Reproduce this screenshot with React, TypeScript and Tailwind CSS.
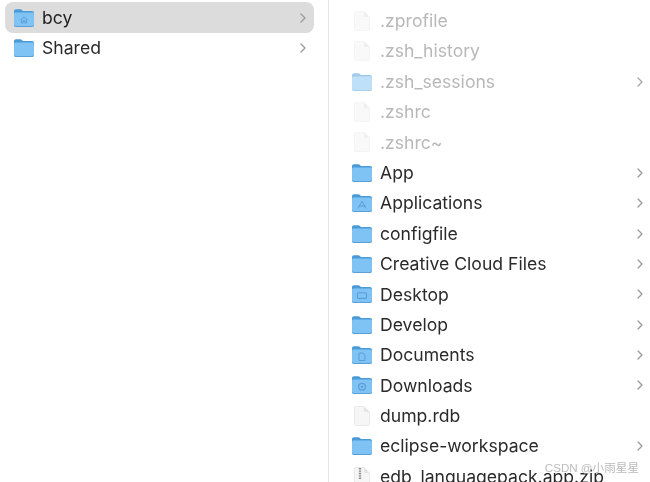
import React from "react";

type Glyph = "none" | "home" | "apps" | "desktop" | "docs" | "down";

function Folder({ glyph = "none", faded = false }: { glyph?: Glyph; faded?: boolean }) {
  const mark = "#5a9fd8";
  return (
    <svg width="22" height="20" viewBox="0 0 22 20" className={faded ? "shrink-0 opacity-50" : "shrink-0"}>
      <path d="M1 3.2C1 2 1.8 1.2 3 1.2H7.2C8 1.2 8.4 1.5 9 2.1L9.8 3H19C20.2 3 21 3.8 21 5V8H1Z" fill="#4a9ad8" />
      <path d="M1 6.2C1 5.2 1.7 4.6 2.6 4.6H19.4C20.3 4.6 21 5.2 21 6.2V17C21 18.2 20.2 19 19 19H3C1.8 19 1 18.2 1 17Z" fill="#7fc3f4" />
      <path d="M1 17C1 18.2 1.8 19 3 19H19C20.2 19 21 18.2 21 17V16.6C21 17.5 20.2 18 19 18H3C1.8 18 1 17.5 1 16.6Z" fill="#5a9fd6" />
      {glyph === "home" && <path d="M7.5 12L11 9L14.5 12M8.6 11.4V15H10.2V12.8H11.8V15H13.4V11.4" fill="none" stroke={mark} strokeWidth="1" />}
      {glyph === "apps" && <path d="M11 8L7 15.5M11 8L15 15.5M7.6 13H14.4" fill="none" stroke={mark} strokeWidth="1" />}
      {glyph === "desktop" && <rect x="6.5" y="8.8" width="9" height="5.6" rx="1" fill="none" stroke={mark} strokeWidth="1.1" />}
      {glyph === "docs" && <path d="M8 8H12L14 10V15.5H8Z" fill="none" stroke={mark} strokeWidth="1" />}
      {glyph === "down" && (
        <>
          <circle cx="11" cy="11.8" r="3.4" fill="none" stroke={mark} strokeWidth="1.3" />
          <circle cx="11" cy="11.8" r="1.2" fill={mark} />
        </>
      )}
    </svg>
  );
}

function FileIcon({ faded = false, zip = false }: { faded?: boolean; zip?: boolean }) {
  return (
    <svg width="22" height="20" viewBox="0 0 22 20" className="shrink-0">
      <path
        d="M3.5 1.5C3.5 0.9 3.9 0.5 4.5 0.5H13L18.5 6V18.5C18.5 19.1 18.1 19.5 17.5 19.5H4.5C3.9 19.5 3.5 19.1 3.5 18.5Z"
        fill={faded ? "#f9f9f9" : "#f6f6f6"}
        stroke={faded ? "#f1f1f1" : "#e6e6e6"}
        strokeWidth="0.8"
      />
      <path d="M13 0.5V6H18.5Z" fill={faded ? "#efefef" : "#e4e4e4"} />
      {zip && <path d="M9 1V13" stroke="#8a8a8a" strokeWidth="2.4" strokeDasharray="1.4 1" />}
    </svg>
  );
}

function Chevron({ faded = false }: { faded?: boolean }) {
  return (
    <svg width="8" height="12" viewBox="0 0 8 12" className="shrink-0">
      <path d="M2 2L6 6L2 10" fill="none" stroke={faded ? "#a6a6a6" : "#9a9a9a"} strokeWidth="1.3" strokeLinecap="round" strokeLinejoin="round" />
    </svg>
  );
}

type Item = { name: string; kind: "folder" | "file" | "zip"; glyph?: Glyph; faded?: boolean };

const items: Item[] = [
  { name: ".zprofile", kind: "file", faded: true },
  { name: ".zsh_history", kind: "file", faded: true },
  { name: ".zsh_sessions", kind: "folder", faded: true },
  { name: ".zshrc", kind: "file", faded: true },
  { name: ".zshrc~", kind: "file", faded: true },
  { name: "App", kind: "folder" },
  { name: "Applications", kind: "folder", glyph: "apps" },
  { name: "configfile", kind: "folder" },
  { name: "Creative Cloud Files", kind: "folder" },
  { name: "Desktop", kind: "folder", glyph: "desktop" },
  { name: "Develop", kind: "folder" },
  { name: "Documents", kind: "folder", glyph: "docs" },
  { name: "Downloads", kind: "folder", glyph: "down" },
  { name: "dump.rdb", kind: "file" },
  { name: "eclipse-workspace", kind: "folder" },
  { name: "edb_languagepack.app.zip", kind: "zip" },
];

function Row({ item }: { item: Item }) {
  return (
    <div className="flex h-[30.4px] shrink-0 items-center pl-[22px] pr-[6px]">
      {item.kind === "folder" ? (
        <Folder glyph={item.glyph} faded={item.faded} />
      ) : (
        <FileIcon faded={item.faded} zip={item.kind === "zip"} />
      )}
      <span className={"ml-[7px] flex-1 whitespace-nowrap " + (item.faded ? "text-[#b8b8b8]" : "text-[#2a2a2a]")}>{item.name}</span>
      {item.kind === "folder" && <Chevron faded={item.faded} />}
    </div>
  );
}

export default function App() {
  return (
    <div className="relative flex h-[482px] w-[650px] overflow-hidden bg-white font-['Inter',sans-serif] text-[17.6px] leading-none blur-[0.4px]">
      <div className="flex w-[329px] shrink-0 flex-col border-r border-[#e6e6e6] pl-[5px] pr-[14px] pt-[2px]">
        <div className="flex h-[31px] items-center rounded-[8px] bg-[#dcdcdc] pl-[8px] pr-[7px]">
          <Folder glyph="home" />
          <span className="ml-[7px] flex-1 text-[#1f1f1f]">bcy</span>
          <Chevron />
        </div>
        <div className="flex h-[30px] items-center pl-[8px] pr-[7px]">
          <Folder />
          <span className="ml-[7px] flex-1 text-[#2a2a2a]">Shared</span>
          <Chevron />
        </div>
      </div>
      <div className="flex min-w-0 flex-1 flex-col pt-[5.6px]">
        {items.map((item) => (
          <Row key={item.name} item={item} />
        ))}
      </div>
      <div className="absolute left-0 top-[-25px] ml-[329px] flex h-[30.4px] items-center pl-[22px]">
        <FileIcon faded />
      </div>
      <div className="absolute right-[11px] top-[462px] font-['Liberation_Sans','Noto_Sans_CJK_SC',sans-serif] text-[11.6px] text-[#b4b4b4]/90">
        CSDN @小雨星星
      </div>
    </div>
  );
}
